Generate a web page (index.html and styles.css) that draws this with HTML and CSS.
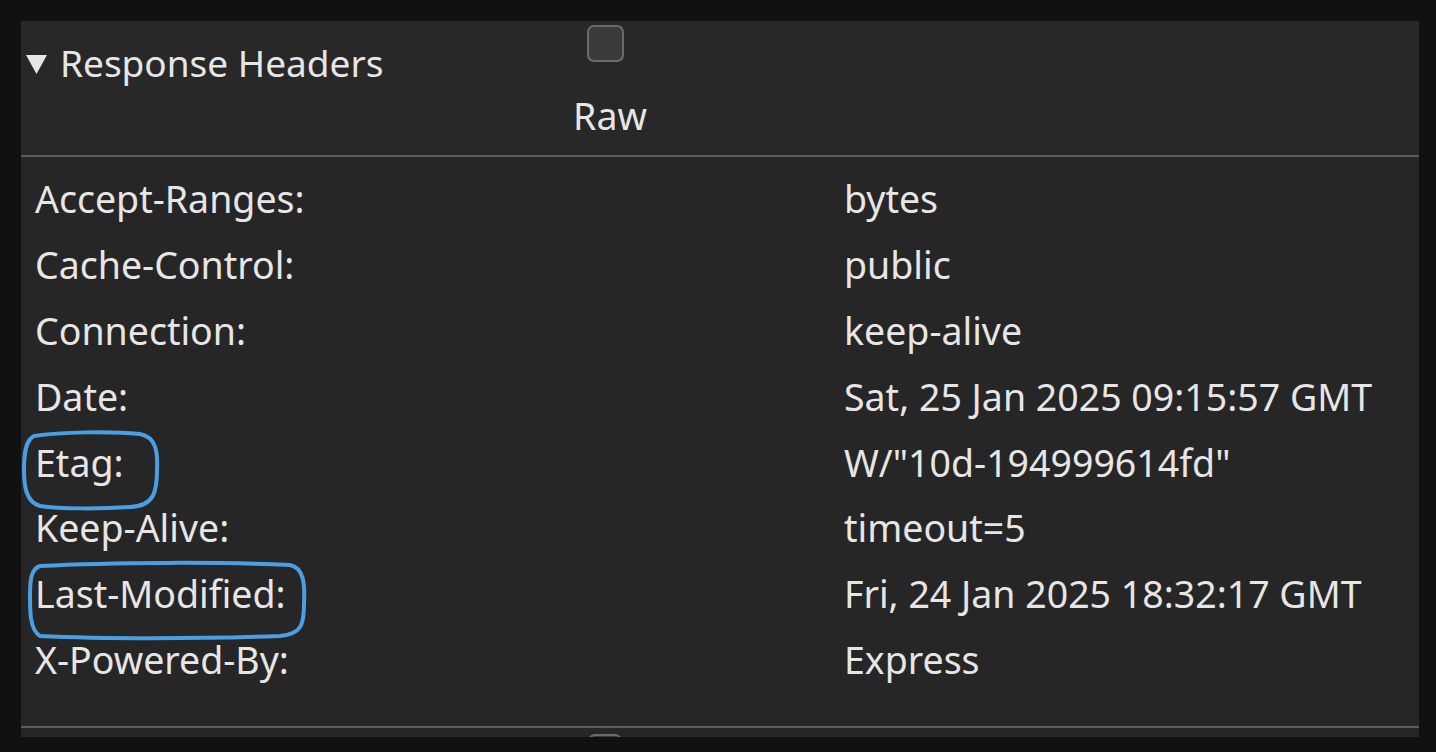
FILE: index.html
```html
<!DOCTYPE html>
<html lang="en">

<head>
    <meta charset="UTF-8">
    <title>Response Headers</title>
    <link rel="stylesheet" href="styles.css">
</head>

<body>
    <div class="panel">
        <!-- Header -->
        <div class="panel-header">
            <div class="toggle">
                <svg class="arrow" width="21" height="19" viewBox="0 0 21 19"><path d="M0 0 H21 L10.5 19 Z" /></svg>
                Response Headers
            </div>
            <label class="raw">
                <span class="checkbox"></span>
                <span>Raw</span>
            </label>
        </div>

        <div class="headers">
            <div class="row"><div class="name">Accept-Ranges:</div><div class="value">bytes</div></div>
            <div class="row"><div class="name">Cache-Control:</div><div class="value">public</div></div>
            <div class="row"><div class="name">Connection:</div><div class="value">keep-alive</div></div>
            <div class="row"><div class="name">Date:</div><div class="value">Sat, 25 Jan 2025 09:15:57 GMT</div></div>
            <div class="row"><div class="name">Etag:</div><div class="value">W/"10d-194999614fd"</div></div>
            <div class="row"><div class="name">Keep-Alive:</div><div class="value">timeout=5</div></div>
            <div class="row"><div class="name">Last-Modified:</div><div class="value">Fri, 24 Jan 2025 18:32:17 GMT</div></div>
            <div class="row"><div class="name">X-Powered-By:</div><div class="value">Express</div></div>
        </div>

        <div class="next-section">
            <span class="checkbox small"></span>
        </div>

        <!-- hand drawn marks -->
        <svg class="marks" width="1436" height="752" viewBox="0 0 1436 752">
            <path d="M34 436 C60 432 110 431 140 434 C156 437 158 452 157 470 C157 492 154 506 130 507 C100 509 60 509 40 506 C26 502 24 486 24 470 C24 452 26 440 34 436 Z" />
            <path d="M40 566 C110 562 230 562 290 565 C304 568 305 584 304 604 C304 624 302 634 280 636 C200 639 100 639 40 636 C30 630 30 612 30 596 C30 580 31 569 40 566 Z" />
        </svg>
    </div>
</body>

</html>
```

FILE: styles.css
```css
* {
    box-sizing: border-box;
    margin: 0;
    padding: 0;
}

body {
    background-color: #111111;
    font-family: 'Noto Sans', 'Liberation Sans', sans-serif;
    color: #e6e6e6;
    width: 1436px;
    height: 752px;
    overflow: hidden;
    padding: 21px 17px 0 21px;
}

.panel {
    background-color: #262626;
    height: 716px;
    overflow: hidden;
}

.panel-header {
    display: flex;
    height: 136px;
    border-bottom: 2px solid #5c5c5c;
    background-color: #282828;
}

.toggle {
    display: flex;
    align-items: center;
    font-size: 37px;
    line-height: 44px;
    height: 64px;
    padding: 20px 0 0 5px;
    width: 549px;
    white-space: nowrap;
}

.arrow {
    fill: #e6e6e6;
    margin: 2px 13px 0 0;
    flex-shrink: 0;
}

.raw {
    display: flex;
    flex-direction: column;
    align-items: center;
    width: 80px;
    font-size: 37.5px;
    line-height: 44px;
    padding-top: 4px;
    gap: 32px;
}

.checkbox {
    display: block;
    width: 37px;
    height: 37px;
    background-color: #3b3b3b;
    border: 2px solid #6b6b6b;
    border-radius: 7px;
}

.raw .checkbox {
    margin-right: 9px;
}

.headers {
    padding: 9px 0 34px 14px;
}

.row {
    display: flex;
    font-size: 37.5px;
    height: 65.8px;
    align-items: center;
}

.name {
    width: 809px;
}

.next-section {
    border-top: 2px solid #5c5c5c;
    padding: 6px 0 0 567px;
}

.checkbox.small {
    width: 34px;
}

.marks {
    position: absolute;
    left: 0;
    top: 0;
    pointer-events: none;
}

.marks path {
    fill: none;
    stroke: #4a9ee2;
    stroke-width: 4;
    stroke-linejoin: round;
}
```
